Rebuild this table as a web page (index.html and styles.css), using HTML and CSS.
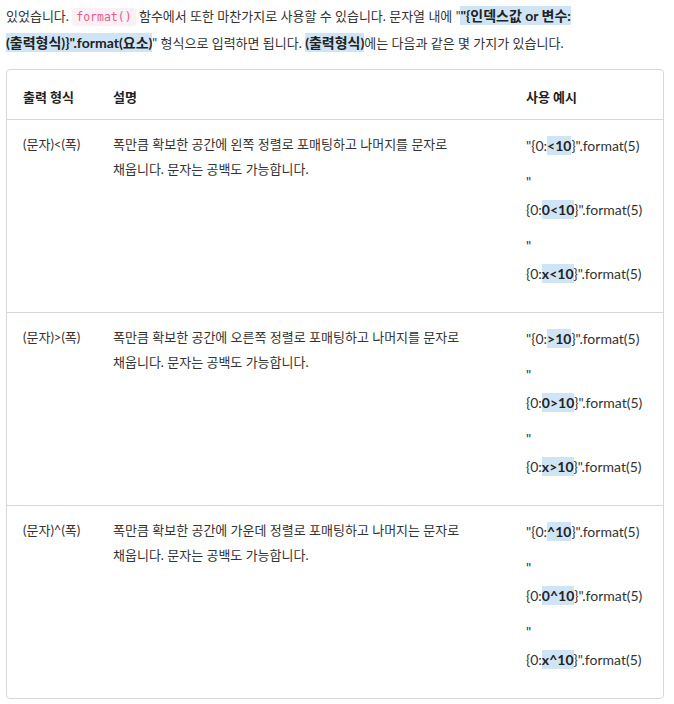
FILE: index.html
```html
<!DOCTYPE html>
<html lang="ko">
<head>
<meta charset="utf-8">
<link rel="stylesheet" href="styles.css">
</head>
<body>
<div class="page">
  <p class="intro">있었습니다. <code class="code">format()</code> 함수에서 또한 마찬가지로 사용할 수 있습니다. 문자열 내에 "<strong class="hl">"{인덱스값 or 변수:(출력형식)}".format(요소)</strong>" 형식으로 입력하면 됩니다. <strong class="hl">(출력형식)</strong>에는 다음과 같은 몇 가지가 있습니다.</p>
  <table class="fmt">
    <colgroup><col class="c1"><col class="c2"><col class="c3"></colgroup>
    <thead>
      <tr><th>출력 형식</th><th>설명</th><th>사용 예시</th></tr>
    </thead>
    <tbody>
      <tr>
        <td>(문자)&lt;(폭)</td>
        <td class="desc">폭만큼 확보한 공간에 왼쪽 정렬로 포매팅하고 나머지를 문자로 채웁니다. 문자는 공백도 가능합니다.</td>
        <td class="ex">
          <p>"{0:<strong class="hl">&lt;10</strong>}".format(5)</p>
          <p>"<br>{0:<strong class="hl">0&lt;10</strong>}".format(5)</p>
          <p>"<br>{0:<strong class="hl">x&lt;10</strong>}".format(5)</p>
        </td>
      </tr>
      <tr>
        <td>(문자)&gt;(폭)</td>
        <td class="desc">폭만큼 확보한 공간에 오른쪽 정렬로 포매팅하고 나머지를 문자로 채웁니다. 문자는 공백도 가능합니다.</td>
        <td class="ex">
          <p>"{0:<strong class="hl">&gt;10</strong>}".format(5)</p>
          <p>"<br>{0:<strong class="hl">0&gt;10</strong>}".format(5)</p>
          <p>"<br>{0:<strong class="hl">x&gt;10</strong>}".format(5)</p>
        </td>
      </tr>
      <tr>
        <td>(문자)^(폭)</td>
        <td class="desc">폭만큼 확보한 공간에 가운데 정렬로 포매팅하고 나머지는 문자로 채웁니다. 문자는 공백도 가능합니다.</td>
        <td class="ex">
          <p>"{0:<strong class="hl">^10</strong>}".format(5)</p>
          <p>"<br>{0:<strong class="hl">0^10</strong>}".format(5)</p>
          <p>"<br>{0:<strong class="hl">x^10</strong>}".format(5)</p>
        </td>
      </tr>
    </tbody>
  </table>
</div>
</body>
</html>
```

FILE: styles.css
```css
html, body {
  margin: 0;
  padding: 0;
  background: #ffffff;
}
body {
  font-family: Lato, "Noto Sans CJK KR", sans-serif;
  font-size: 13px;
  color: #333333;
}
.page {
  padding: 3px 11px 0 6px;
}
.intro {
  margin: 0 0 13px 0;
  line-height: 26px;
  word-break: keep-all;
}
.intro .hl {
  font-size: 14px;
}
.code {
  font-family: "DejaVu Sans Mono", monospace;
  font-size: 11.5px;
  color: #e8598f;
  background: #fbf0f3;
  border-radius: 3px;
  padding: 2px 4px;
}
.hl {
  font-weight: 700;
  background: #cfe5f6;
  color: #222222;
  padding: 1px 0;
}
.fmt {
  width: 658px;
  table-layout: fixed;
  border-collapse: separate;
  border-spacing: 0;
  border: 1px solid #d7d7dc;
  border-radius: 4px;
}
.c1 { width: 90px; }
.c2 { width: 413px; }
.fmt th {
  text-align: left;
  font-weight: 700;
  color: #222222;
  line-height: 25px;
  padding: 15px 16px 9px 16px;
}
.fmt td {
  vertical-align: top;
  line-height: 25px;
  padding: 12px 16px 16px 16px;
  border-top: 1px solid #d7d7dc;
}
.fmt td.desc {
  word-break: keep-all;
  padding-right: 40px;
}
.fmt td.ex {
  font-size: 14px;
}
.ex p {
  margin: 0 0 8px 0;
  line-height: 28px;
  white-space: nowrap;
}
```
